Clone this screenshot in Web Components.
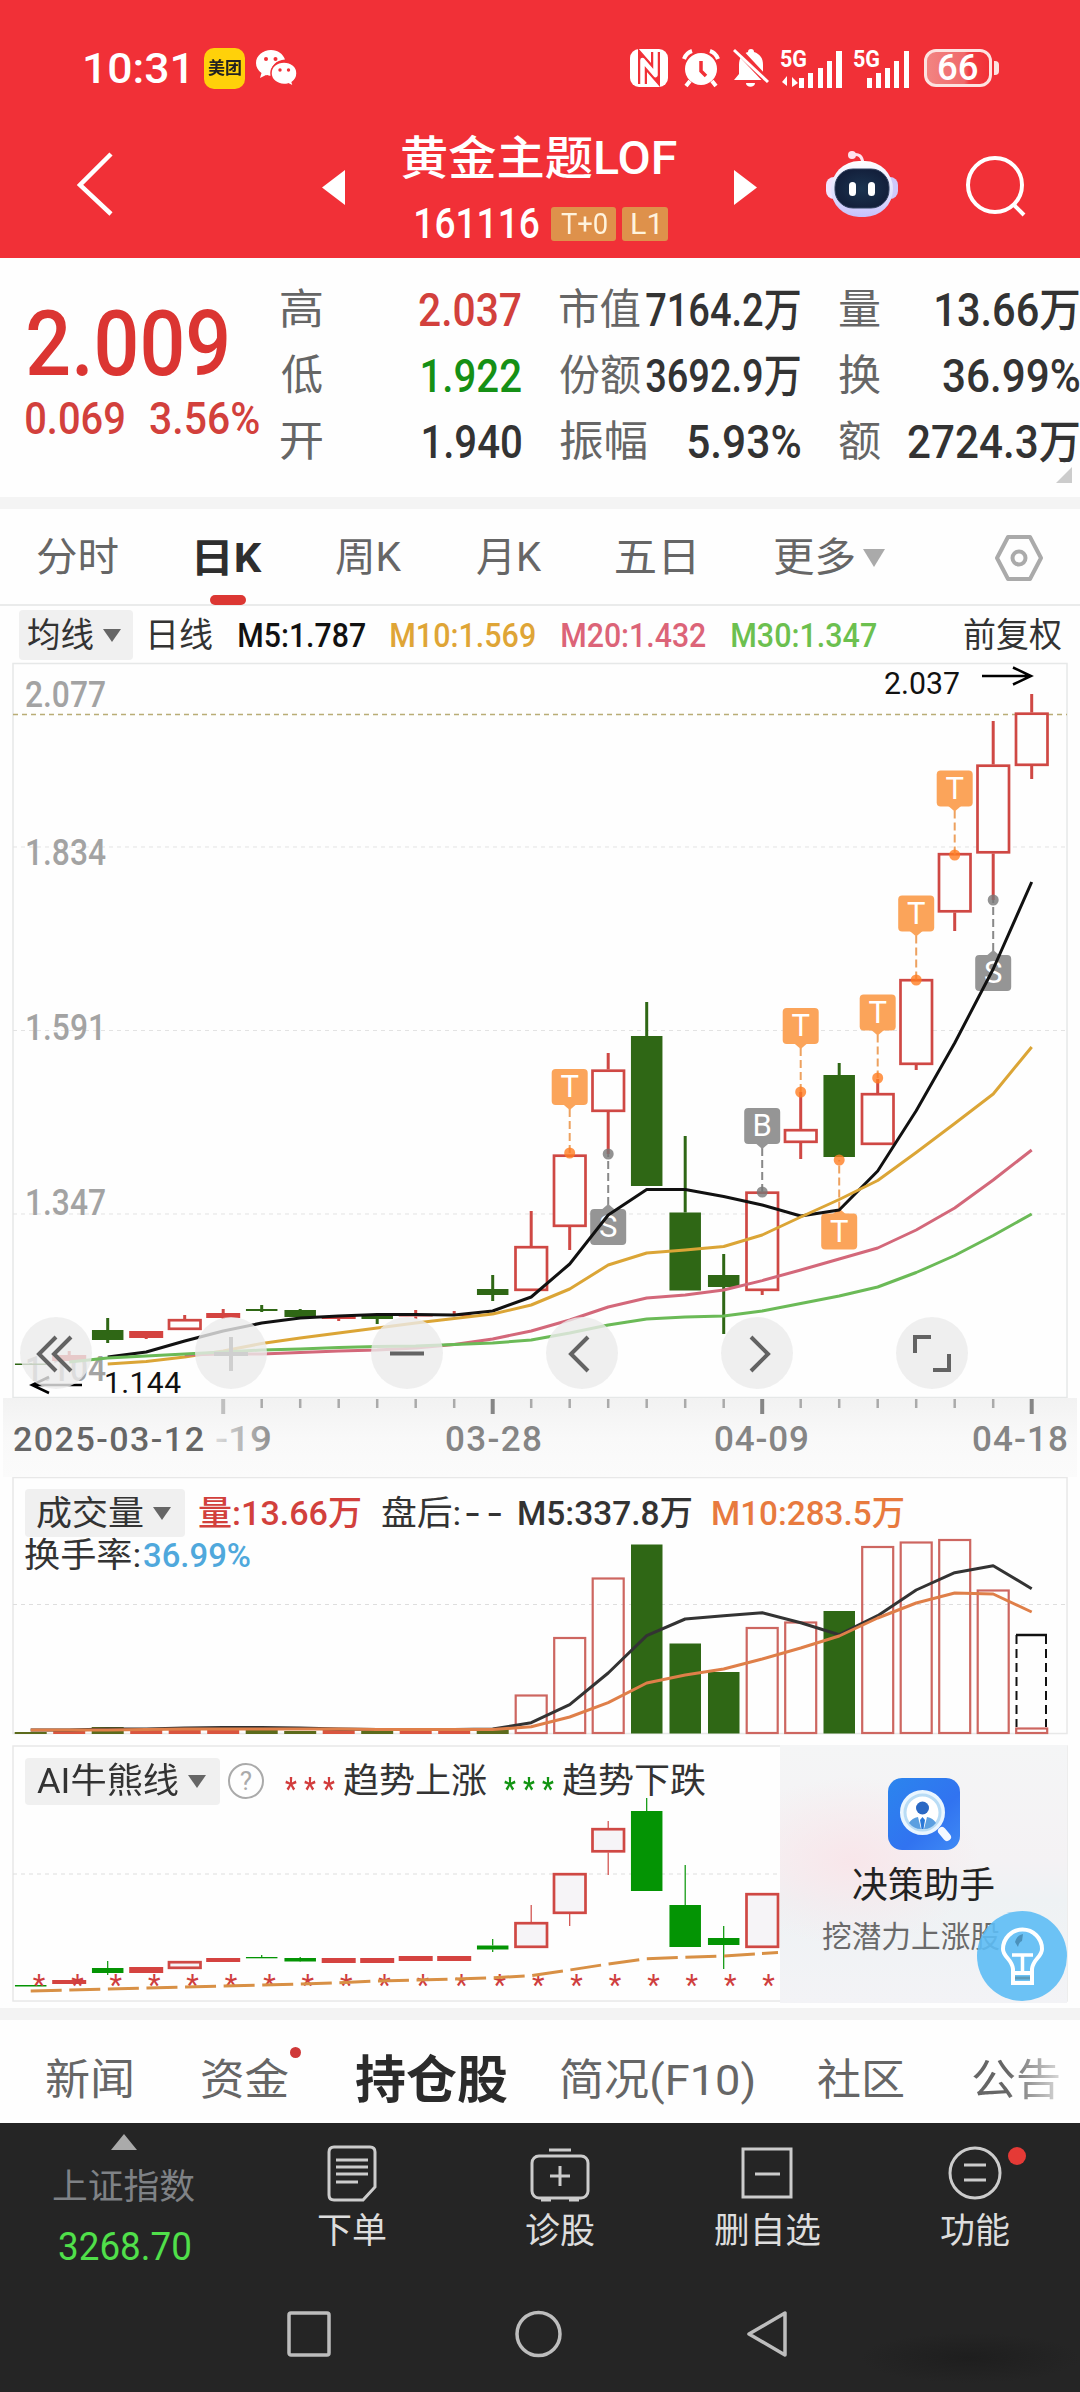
<!DOCTYPE html>
<html lang="zh-CN">
<head>
<meta charset="utf-8">
<title>黄金主题LOF</title>
<style>
  body {
    margin: 0;
    width: 1080px;
    height: 2392px;
    overflow: hidden;
    background: #fefefe;
    color: #333;
    font-family: Roboto, "Noto Sans CJK SC", sans-serif;
  }
</style>
</head>
<body>
<quote-app></quote-app>

<script>
const canvasCtx = document.createElement('canvas').getContext('2d');

// one line of text condensed or widened to a given width
class FitText extends HTMLElement {
    constructor() {
        super();
        this.attachShadow({ mode: 'open' });
        this.shadowRoot.innerHTML = `
          <style>
          :host { display: block; flex: none; line-height: 1; white-space: nowrap; }
          span { display: inline-block; transform-origin: 0 50%; }
          </style>
          <span><slot></slot></span>
        `;
    }

    connectedCallback() {
        this.fit();
    }

    fit() {
        const width = Number(this.getAttribute('w'));
        const style = getComputedStyle(this);
        canvasCtx.font = `${style.fontWeight} ${style.fontSize} ${style.fontFamily}`;
        canvasCtx.letterSpacing = style.letterSpacing === 'normal' ? '0px' : style.letterSpacing;
        const m = canvasCtx.measureText(this.textContent);
        const ink = m.actualBoundingBoxLeft + m.actualBoundingBoxRight;
        const scale = width / ink;
        this.style.width = width + 'px';
        this.shadowRoot.querySelector('span').style.transform =
            `translateX(${m.actualBoundingBoxLeft * scale}px) scaleX(${scale})`;
    }
}
window.customElements.define('fit-text', FitText);

// small helper for the plain, stateless parts of the page
function define(name, css, html) {
    const template = document.createElement('template');
    template.innerHTML = `<style>${css}</style>${html}`;
    window.customElements.define(name, class extends HTMLElement {
        constructor() {
            super();
            this.attachShadow({ mode: 'open' });
        }

        connectedCallback() {
            this.shadowRoot.appendChild(template.content.cloneNode(true));
            this.shadowRoot.querySelectorAll('fit-text').forEach(t => t.fit());
        }
    });
}

// fit-text with width, left margin and an optional style
const ft = (text, w, ml = 0, style = '') =>
    `<fit-text w="${w}" style="margin-left:${ml}px;${style}">${text}</fit-text>`;

const signal = `
  <svg width="64" height="44" viewBox="-2 -4 64 44" fill="#fff">
    <text x="-1" y="17" font-size="23" font-weight="700" textLength="27" lengthAdjust="spacingAndGlyphs">5G</text>
`;

define('status-bar', `
  :host { display: flex; align-items: center; box-sizing: border-box; height: 110px;
          padding: 26px 0 0 84px; background: #f13037; color: #fff; }
  .meituan { display: flex; align-items: center; justify-content: center; width: 41px; height: 41px;
             margin-left: 17px; border-radius: 10px; background: #ffd10a; color: #222; font-weight: 700; font-size: 17px; }
  svg { flex: none; display: block; overflow: visible; }
  .battery { position: relative; display: flex; align-items: center; justify-content: center; box-sizing: border-box;
             width: 68px; height: 38px; margin-left: 15px; border: 3px solid #fde3e1; border-radius: 12px;
             background: linear-gradient(90deg, #f28482, #f06a6b 60%, #f13f43 68%, #f13037); }
  .battery::after { content: ""; position: absolute; right: -10px; top: 9px; width: 5px; height: 14px;
             border-radius: 0 4px 4px 0; background: #fde3e1; }
`, `
  ${ft('10:31', 102, 1, 'font-size:43px;font-weight:500')}
  <div class="meituan">${ft('美团', 33)}</div>
  <svg width="42" height="38" viewBox="0 0 42 38" style="margin-left:11px" fill="#fff">
    <path d="M15 1C7 1 0 6.600 0 14c0 4 2 7.500 5.500 10L4 29l6-3c2 .6 3.500.8 5 .8C14 17 20 11 29 10.500 27 5 22 1 15 1z"/>
    <path d="M28 13c-7.500 0-13 5-13 11.200S20.500 35.500 28 35.500c1.500 0 3-.2 4.300-.6L37.500 37.500l-1.300-4.200C39 31.200 41 28 41 24.200 41 18 35.500 13 28 13z" stroke="#f13037" stroke-width="1.500"/>
    <g fill="#f13037"><circle cx="10" cy="10" r="2"/><circle cx="19.500" cy="10" r="2"/><circle cx="24" cy="21" r="1.700"/><circle cx="32.500" cy="21" r="1.700"/></g>
  </svg>
  <svg width="38" height="38" viewBox="0 0 38 38" style="margin-left:332px" fill="none" stroke-linejoin="round">
    <rect x="0" y="0" width="38" height="38" rx="9" fill="#fff"/>
    <path d="M12.500 35V11L25.500 26V3" stroke="#f13037" stroke-width="9" stroke-linejoin="miter"/>
    <path d="M12.500 38V11L25.500 26V0" stroke="#fff" stroke-width="4.500"/>
  </svg>
  <svg width="38" height="38" viewBox="0 0 38 38" style="margin-left:14px" fill="none" stroke="#fff" stroke-width="4">
    <circle cx="19" cy="20" r="16" fill="#fff" stroke="none"/>
    <path d="M2 10Q4 4 10 2M28 2Q34 4 36 10" stroke-width="4"/><path d="M8 32l-4 5M30 32l4 5"/>
    <path d="M19 12v10l5 5" stroke="#f13037" stroke-width="3.500"/>
  </svg>
  <svg width="38" height="40" viewBox="0 0 38 40" style="margin-left:12px">
    <path d="M19 1c2 0 3 1.200 3 3 6 2 9 6 9 13v9l4 6H2l5-6v-9C7 10 10 6 16 4c0-1.800 1-3 3-3z" fill="#fff"/>
    <path d="M14 35h9c0 5-9 5-9 0z" fill="#fff"/>
    <path d="M5 1l31 33" stroke="#f13037" stroke-width="7"/><path d="M2 2l34 32" stroke="#fff" stroke-width="3"/>
  </svg>
  <div style="margin-left:9px">${signal}
    <path d="M1 32l5-6v10zM17 33l-6-6v10z"/>
    <path d="M18 28h5v10h-5zM27 23h5v15h-5zM37 18h5v20h-5zM46 11h5v27h-5zM55 1h6v37h-6z"/></svg></div>
  <div style="margin-left:9px;width:60px">${signal}
    <path d="M13 28h5v10h-5zM22 23h5v15h-5zM31 18h5v20h-5zM40 11h5v27h-5zM50 1h5v37h-5z"/></svg></div>
  <div class="battery" style="margin-left:12px">${ft('66', 38, 0, 'font-size:36px;font-weight:500')}</div>
`);

define('title-bar', `
  :host { display: flex; align-items: center; box-sizing: border-box; height: 148px;
          padding-left: 75px; background: #f13037; color: #fff; }
  svg { flex: none; display: block; }
  .name { width: 275px; height: 148px; margin: 0 57px; }
  .name > fit-text { margin-top: 25px !important; font-size: 46px; font-weight: 500; }
  .code { display: flex; align-items: center; height: 34px; margin-top: 26px; padding-left: 14px; }
  .tag { display: flex; align-items: center; justify-content: center; height: 34px; border-radius: 3px;
         background: #de914b; color: #fff3dd; font-size: 29px; }
`, `
  <svg width="40" height="68" viewBox="0 0 40 68" fill="none" stroke="#fff" stroke-width="4.500"><path d="M36 4L5 35l31 29"/></svg>
  <svg width="23" height="35" viewBox="0 0 23 35" fill="#fff" style="margin:6px 0 0 207px"><path d="M23 0v35L0 17.500z"/></svg>
  <div class="name">
    ${ft('黄金主题LOF', 275)}
    <div class="code">${ft('161116', 123, 0, 'font-size:42px;font-weight:500')}
      <div class="tag" style="width:65px;margin-left:12px">${ft('T+0', 46)}</div>
      <div class="tag" style="width:46px;margin-left:6px">${ft('L1', 26)}</div>
    </div>
  </div>
  <svg width="23" height="35" viewBox="0 0 23 35" fill="#fff" style="margin-top:6px"><path d="M0 0v35l23-17.500z"/></svg>
  <svg width="72" height="68" viewBox="0 0 72 68" style="margin-left:69px">
    <defs><linearGradient id="head" x1="0" y1="0" x2="0" y2="1"><stop offset="0" stop-color="#fff"/><stop offset=".65" stop-color="#dcdcff"/><stop offset="1" stop-color="#c6c0fb"/></linearGradient>
    <radialGradient id="face"><stop offset="0" stop-color="#1b3450"/><stop offset="1" stop-color="#13203c"/></radialGradient></defs>
    <path d="M26 5q10-3 11 9" fill="none" stroke="#ffe3ee" stroke-width="3"/><circle cx="26" cy="5" r="4" fill="#ffe3ee"/>
    <rect x="0" y="27" width="16" height="22" rx="8" fill="#f1e4ff"/><rect x="56" y="27" width="16" height="22" rx="8" fill="#cfc8fb"/>
    <rect x="5" y="11" width="62" height="56" rx="28" fill="url(#head)"/>
    <rect x="9" y="19" width="54" height="39" rx="18" fill="url(#face)" stroke="#31415f"/>
    <rect x="23" y="32" width="7" height="14" rx="3.500" fill="#fff"/><rect x="42" y="32" width="7" height="14" rx="3.500" fill="#fff"/>
  </svg>
  <svg width="62" height="62" viewBox="0 0 62 62" fill="none" stroke="#fff" stroke-width="4" style="margin:5px 0 0 67px"><circle cx="30" cy="29" r="27"/><path d="M48 48l11 11"/></svg>
`);

const quoteRow = (label, lw, value, vw, color = '#333') =>
    `<div class="row">${ft(label, lw, 0, 'color:#666;font-size:42px')}${ft(value, vw, 0, `color:${color}`)}</div>`;

define('quote-panel', `
  :host { position: relative; display: flex; box-sizing: border-box; height: 251px; background: #fefefe; border-bottom: 12px solid #f4f4f4; }
  .price { flex: none; width: 253px; padding: 41px 0 0 28px; color: #db3532; }
  .change { display: flex; margin-top: 7px; margin-left: -2px; font-size: 44px; font-weight: 500; color: #d2403c; }
  .col { width: 240px; padding-top: 19px; margin-right: 39px; flex: none; font-size: 46px; font-weight: 500; }
  .row { display: flex; align-items: center; justify-content: space-between; height: 66px; }
  .row > fit-text:first-child { font-weight: 400; }
  i { position: absolute; right: 8px; bottom: 14px; border: 8px solid; border-color: transparent #ccc #ccc transparent; }
`, `
  <div class="price">
    ${ft('2.009', 199, 0, 'font-size:91px;font-weight:500')}
    <div class="change">${ft('0.069', 98)}${ft('3.56%', 109, 26)}</div>
  </div>
  <div class="col">${quoteRow('高', 41, '2.037', 102, '#d2403c')}${quoteRow('低', 41, '1.922', 99, '#159015')}${quoteRow('开', 41, '1.940', 98)}</div>
  <div class="col">${quoteRow('市值', 80, '7164.2万', 154)}${quoteRow('份额', 80, '3692.9万', 154)}${quoteRow('振幅', 86, '5.93%', 112)}</div>
  <div class="col">${quoteRow('量', 41, '13.66万', 143)}${quoteRow('换', 41, '36.99%', 136)}${quoteRow('额', 41, '2724.3万', 171)}</div>
  <i></i>
`);

define('period-tabs', `
  :host { display: flex; align-items: center; box-sizing: border-box; height: 97px; border-bottom: 2px solid #eaebeb;
          font-size: 40px; color: #666; }
  :host > *, fit-text { padding-top: 2px; }
  .active { position: relative; color: #2e2e2e; font-weight: 700; }
  .active::after { content: ""; position: absolute; left: 13px; bottom: -26px; width: 36px; height: 10px; border-radius: 5px; background: #dc3733; }
  svg { display: block; flex: none; }
`, `
  ${ft('分时', 81, 37)}
  <div class="active" style="margin-left:79px">${ft('日K', 65)}</div>
  ${ft('周K', 66, 74)}${ft('月K', 65, 75)}${ft('五日', 78, 74)}${ft('更多', 80, 80)}
  <svg width="22" height="18" style="margin-left:9px"><path d="M0 0h22L11 18z" fill="#aaa"/></svg>
  <svg width="50" height="48" viewBox="0 0 50 48" fill="none" stroke="#aaa" stroke-width="4" stroke-linejoin="round" style="margin-left:109px"><path d="M14 3h22l11 21-11 21H14L3 24z"/><circle cx="25" cy="24" r="6.500"/></svg>
`);

define('drop-button', `
  :host { display: flex; flex: none; align-items: center; background: #f0f0f0; border-radius: 4px; }
  svg { margin-left: 10px; }
`, `<slot></slot><svg width="18" height="13"><path d="M0 0h18L9 13z" fill="#666"/></svg>`);

define('ma-legend', `
  :host { display: flex; align-items: center; box-sizing: border-box; height: 56px; padding-top: 2px; font-size: 34px; }
  drop-button { height: 50px; width: 105px; padding-left: 9px; margin-left: 19px; }
  .num { display: flex; font-weight: 500; }
`, `
  <drop-button>${ft('均线', 65)}</drop-button>
  ${ft('日线', 62, 17)}
  <div class="num">
  ${ft('M5:1.787', 126, 27, 'color:#111')}${ft('M10:1.569', 144, 26, 'color:#dfa536')}
  ${ft('M20:1.432', 144, 27, 'color:#dc6478')}${ft('M30:1.347', 144, 26, 'color:#6cc04f')}
  </div>
  ${ft('前复权', 97, 88)}
`);

const RED = '#cf4844';
const GREEN = '#2f6715';
const cx = i => 30.7 + 38.5 * i;

const polyline = (start, ys, color, extra = '') =>
    `<polyline points="${ys.map((y, n) => cx(start + n).toFixed(1) + ',' + y).join(' ')}" fill="none" stroke="${color}" stroke-width="3" stroke-linejoin="round" ${extra}/>`;

const svgText = (x, y, w, size, text, color, adjust = 'spacingAndGlyphs') =>
    `<text x="${x}" y="${y}" font-size="${size}" fill="${color}" textLength="${w}" lengthAdjust="${adjust}">${text}</text>`;

// [type, high, top, bottom, low], type: r hollow red, f flat red, g green
function candle(i, [type, high, top, bottom, low], green, hollow, wick) {
    const x = cx(i);
    const color = type === 'g' ? green : RED;
    let out = '';
    if (high < top) out += `<path d="M${x} ${high}V${top}" stroke="${color}" stroke-width="${wick}"/>`;
    if (low > bottom) out += `<path d="M${x} ${bottom}V${low}" stroke="${color}" stroke-width="${wick}"/>`;
    if (type === 'r') {
        out += `<rect x="${x - 15.7}" y="${top + 1.2}" width="31.500" height="${bottom - top - 2.4}" fill="${hollow}" stroke="${color}" stroke-width="2.700"/>`;
    } else {
        const w = type === 'f' ? 34 : 31.5;
        out += `<rect x="${x - w / 2}" y="${top}" width="${w}" height="${bottom - top}" fill="${type === 'f' ? '#d44340' : color}"/>`;
    }
    return out;
}

const kData = [
    ['g', 1363, 1363.5, 1365, 1365], ['f', 1351, 1355, 1361, 1361], ['g', 1318, 1330, 1340, 1343],
    ['f', 1331, 1331, 1338, 1339], ['r', 1315, 1319, 1330, 1330], ['f', 1309, 1313, 1318, 1319],
    ['g', 1305, 1309, 1311, 1312], ['g', 1309, 1310, 1317, 1317], ['f', 1315, 1316, 1319, 1321],
    ['g', 1316, 1316, 1319, 1324], ['f', 1310, 1315, 1316.5, 1319], ['f', 1311, 1314.5, 1316, 1316],
    ['g', 1275, 1289, 1295, 1301], ['r', 1211, 1246, 1291, 1291], ['r', 1155, 1154.5, 1227, 1250],
    ['r', 1053, 1069.5, 1112, 1154], ['g', 1002, 1036, 1186, 1186], ['g', 1136, 1212.5, 1290.5, 1290],
    ['g', 1254, 1275, 1287, 1334], ['r', 1192, 1191.5, 1291, 1295], ['r', 1092, 1129, 1143, 1159],
    ['g', 1063, 1075, 1157, 1157], ['r', 1079, 1093, 1145, 1145], ['r', 980, 979, 1065, 1070],
    ['r', 855, 853, 912.5, 931], ['r', 721, 764.5, 853.5, 900], ['r', 694, 712.5, 766, 779],
];

// [index, letter, box top, points down, dot y]
const marks = [
    [14, 'T', 1069, true, 1153], [15, 'S', 1209, false, 1154], [19, 'B', 1108, true, 1192],
    [20, 'T', 1008, true, 1092], [21, 'T', 1213.5, false, 1160], [22, 'T', 994.5, true, 1078],
    [23, 'T', 895.5, true, 980], [24, 'T', 770.5, true, 855], [25, 'S', 955, false, 900],
];

function mark([i, letter, top, down, dot]) {
    const x = cx(i);
    const color = letter === 'T' ? '#fba45a' : '#959595';
    const tip = down ? `M${x - 7} ${top + 35}h14l-7 6z` : `M${x - 7} ${top + 1}h14l-7-6z`;
    return `
      <path d="M${x} ${down ? top + 40 : top - 4}V${dot}" stroke="${letter === 'T' ? '#eda15f' : '#888'}" stroke-width="2" stroke-dasharray="8 4"/>
      <circle cx="${x}" cy="${dot}" r="5.500" fill="${letter === 'T' ? '#ff7d22' : '#777'}" opacity=".8"/>
      <rect x="${x - 18}" y="${top}" width="36" height="36" rx="4" fill="${color}"/><path d="${tip}" fill="${color}"/>
      <text x="${x}" y="${top + 28}" font-size="31" text-anchor="middle" fill="#fff">${letter}</text>`;
}

const ticks = kData.map((_, i) => i < 5 ? '' : (i - 5) % 7
    ? `<path d="M${cx(i)} 1399V1408" stroke="#aaa" stroke-width="2.500"/>`
    : `<path d="M${cx(i)} 1399V1414" stroke="${i === 5 ? '#c0c0c0' : '#868686'}" stroke-width="4"/>`).join('');

define('k-chart', `
  :host { position: relative; display: block; height: 815px; }
  svg { display: block; }
  .controls { position: absolute; left: 20px; top: 655px; display: flex; gap: 103.300px; }
  .controls svg { width: 72px; height: 72px; border-radius: 50%; background: rgba(235, 235, 235, .8);
                  fill: none; stroke: #636363; stroke-width: 4; }
`, `
  <svg width="1080" height="815" viewBox="0 662 1080 815">
    <defs>
      <linearGradient id="axis" x1="0" y1="0" x2="0" y2="1"><stop offset="0" stop-color="#f2f2f2"/><stop offset=".5" stop-color="#f9f9f9"/><stop offset="1" stop-color="#fbfbfb"/></linearGradient>
      <linearGradient id="fade"><stop offset="0" stop-color="#dcdcdc"/><stop offset="1" stop-color="#8f8f8f"/></linearGradient>
    </defs>
    <rect x="13" y="663.500" width="1054" height="734" fill="none" stroke="#e6e8e8" stroke-width="1.500"/>
    <rect x="3" y="1398" width="1074" height="79" fill="url(#axis)"/>
    <g stroke="#e3e3e3" stroke-dasharray="4 4"><path d="M13 847H1067M13 1030.500H1067M13 1214H1067"/></g>
    <path d="M13 714.500H1067" stroke="#b9ad76" stroke-width="1.500" stroke-dasharray="5 4"/>
    <g font-weight="500">
    ${svgText(25, 707, 81, 36, '2.077', '#a3a3a3')}${svgText(25, 865, 81, 36, '1.834', '#a3a3a3')}
    ${svgText(25, 1040, 81, 36, '1.591', '#a3a3a3')}${svgText(25, 1215, 81, 36, '1.347', '#a3a3a3')}
    ${svgText(25, 1381, 81, 35, '1.104', '#a3a3a3')}
    </g>
    ${kData.map((d, i) => candle(i, d, GREEN, '#fefefe', 3)).join('')}
    ${marks.map(mark).join('')}
    ${polyline(2, [1357, 1352, 1341, 1331, 1323, 1318, 1316, 1314.5, 1314.5, 1315, 1311, 1297, 1264, 1215, 1189.5, 1189.5, 1196.5, 1205, 1216, 1210, 1171, 1110.7, 1043, 969, 882], '#111')}
    ${polyline(2, [1364, 1361.5, 1357, 1351, 1343.5, 1338, 1333, 1328, 1323, 1318.5, 1314, 1305, 1289, 1265, 1253, 1250, 1246.5, 1235, 1217, 1199.5, 1180.5, 1152.5, 1123.5, 1094, 1047], '#dba536')}
    ${polyline(4, [1355, 1354, 1354, 1352.5, 1351, 1350, 1348, 1344.5, 1339, 1331, 1320, 1307, 1298, 1295, 1290, 1280.6, 1270, 1259, 1248, 1230, 1208, 1180, 1150], '#d3687a')}
    ${polyline(1, [1362, 1358, 1356, 1354, 1352, 1350, 1349, 1347.5, 1346.5, 1346, 1344.5, 1343, 1340, 1333, 1325, 1319, 1317, 1316, 1311, 1303.5, 1296, 1287, 1272.5, 1255.5, 1235.5, 1214], '#6bba57')}
    <g stroke="#000" stroke-width="2.500" fill="none"><path d="M982 676H1031M1013 667.500L1031 676L1013 684.500"/><path d="M82 1385H32M49 1377L32 1385L49 1393"/></g>
    ${svgText(884, 694, 76, 32, '2.037', '#111')}
    ${svgText(104, 1393, 77, 30, '1.144', '#111', 'spacing')}
    ${ticks}
    <g font-weight="500">
    ${svgText(215, 1451, 57, 35, '-19', 'url(#fade)')}
    ${svgText(13, 1451, 191, 34, '2025-03-12', '#666', 'spacing')}
    ${svgText(445, 1451, 97, 35, '03-28', '#858585', 'spacing')}${svgText(714, 1451, 95, 35, '04-09', '#858585', 'spacing')}
    ${svgText(972, 1451, 96, 35, '04-18', '#858585', 'spacing')}
    </g>
  </svg>
  <div class="controls">
    <svg viewBox="0 0 72 72"><path d="M36 20L19 37l17 17M51 20L34 37l17 17"/></svg>
    <svg viewBox="0 0 72 72" style="stroke:#cfcfcf"><path d="M36 20v34M19 37h34"/></svg>
    <svg viewBox="0 0 72 72"><path d="M19 36.500h34"/></svg>
    <svg viewBox="0 0 72 72"><path d="M42 20L25 37l17 17"/></svg>
    <svg viewBox="0 0 72 72"><path d="M30 20l17 17-17 17"/></svg>
    <svg viewBox="0 0 72 72"><path d="M35 20H19v16M37 53h16V37"/></svg>
  </div>
`);

// top of each volume bar from the fourteenth day on
const volTops = [1694.5, 1637, 1577.5, 1544.5, 1643.5, 1672, 1627, 1621.5, 1611, 1546, 1541.5, 1539, 1589.5, 1727.5];
const volGreen = [16, 17, 18, 21];
const volSmall = [['g', 1732], ['r', 1730], ['g', 1727], ['r', 1729], ['r', 1730], ['r', 1730], ['g', 1730], ['g', 1731], ['r', 1730], ['g', 1731], ['r', 1730], ['r', 1730], ['g', 1728]];

const volBars = volTops.map((top, n) => {
    const i = n + 13;
    if (volGreen.includes(i)) {
        return `<rect x="${cx(i) - 15.7}" y="${top}" width="31.500" height="${1733.5 - top}" fill="${GREEN}"/>`;
    }
    return `<rect x="${cx(i) - 15.5}" y="${top + 1}" width="31" height="${1732 - top}" fill="none" stroke="#cd6660" stroke-width="2.200"/>`;
}).join('') + volSmall.map(([t, y], i) =>
    `<rect x="${cx(i) - 16}" y="${y}" width="32" height="${1734 - y}" fill="${t === 'g' ? '#5c6b1c' : '#d9553f'}"/>`).join('');

define('volume-chart', `
  :host { position: relative; display: block; box-sizing: border-box; height: 268px; padding: 11px 0 0 25px; }
  .plot { position: absolute; left: 0; top: 0; }
  .row { position: relative; display: flex; align-items: center; font-size: 34px; font-weight: 500; }
  .cjk { font-weight: 400; }
  drop-button { width: 148px; height: 48px; padding-left: 12px; font-weight: 400; }
`, `
  <svg class="plot" width="1080" height="268" viewBox="0 1477 1080 268">
    <rect x="13" y="1477.500" width="1054" height="256" fill="#fefefe" stroke="#e8e8e8" stroke-width="1.500"/>
    <path d="M13 1604.500H1067" stroke="#dedede" stroke-dasharray="4 4"/>
    ${volBars}
    <path d="M1016 1635h31" stroke="#111" stroke-width="2.500"/><path d="M1016.500 1635V1727M1046 1635V1727" stroke="#111" stroke-width="2" stroke-dasharray="9 5"/>
    ${polyline(0, [1730, 1730, 1729, 1729, 1728, 1727.5, 1727.5, 1728, 1729, 1729.5, 1729.5, 1729.5, 1729, 1722.7, 1704.7, 1673, 1635.7, 1619, 1615.7, 1612.7, 1622.7, 1634.7, 1615.7, 1590, 1572.7, 1565.7, 1588.7], '#333')}
    ${polyline(0, [1730, 1730, 1730, 1729.5, 1729, 1729, 1729, 1729, 1729, 1729.5, 1729.5, 1729.5, 1729.5, 1726.7, 1717, 1702.7, 1683, 1675, 1669, 1659, 1648, 1636, 1618, 1603, 1593, 1594, 1612], '#df7f49')}
  </svg>
  <div class="row" style="height:50px">
    <drop-button>${ft('成交量', 106)}</drop-button>
    ${ft('量:13.66万', 161, 14, 'color:#d2403c')}${ft('盘后:', 78, 22, 'font-weight:400')}${ft('--', 36, 6, 'letter-spacing:5px')}
    ${ft('M5:337.8万', 172, 17)}${ft('M10:283.5万', 190, 22, 'color:#e87a3e')}
  </div>
  <div class="row" style="height:34px">${ft('换手率:', 115, 0, 'font-weight:400')}${ft('36.99%', 106, 4, 'color:#4fa8dc')}</div>
`);

const trendData = [
    ['g', 1985, 1985, 1986.5, 1986], ['f', 1980, 1980, 1984, 1984], ['g', 1961, 1968, 1973, 1975],
    ['f', 1967, 1967, 1973, 1973], ['r', 1961, 1961, 1969, 1969], ['f', 1958, 1958, 1962, 1962],
    ['g', 1955, 1957, 1958.3, 1958], ['g', 1957, 1958, 1961.5, 1962], ['f', 1958, 1958, 1963, 1963],
    ['f', 1958, 1958, 1963, 1963], ['f', 1956, 1956, 1961, 1961], ['f', 1956, 1956, 1961, 1961],
    ['g', 1939, 1945.5, 1949.5, 1952], ['r', 1905, 1922, 1948, 1948], ['r', 1873, 1873, 1914, 1926],
    ['r', 1821, 1828, 1852.5, 1875], ['g', 1798, 1811, 1891, 1891], ['g', 1865, 1905, 1947, 1947],
    ['g', 1926, 1938, 1945, 1969], ['r', 1893, 1893, 1948, 1948],
];

define('trend-chart', `
  :host { position: relative; display: flex; height: 263px; border-bottom: 12px solid #f3f3f3; }
  .plot { position: absolute; left: 0; top: 0; }
  .row { position: relative; display: flex; flex: none; align-items: center; width: 755px; height: 50px; margin-top: 11px; padding-left: 25px; font-size: 35px; }
  drop-button { width: 183px; height: 47px; padding-left: 12px; }
  .help { box-sizing: border-box; width: 36px; height: 36px; margin-left: 8px; border: 2px solid #aaa; border-radius: 50%;
          color: #aaa; font-size: 26px; line-height: 33px; text-align: center; }
  .stars { font-size: 32px; font-weight: 700; letter-spacing: 9px; padding-top: 13px; }
  .promo { position: relative; flex: none; box-sizing: border-box; width: 287px; height: 258px; padding-top: 33px;
           background: radial-gradient(ellipse at 25% 45%, #f8e6ea, transparent 42%), linear-gradient(#f4f5f6, #f4f2f4 45%, #eef2f4 60%, #f3f3f6); }
  .promo > svg { display: block; margin-left: 108px; }
  .tip { position: absolute; right: 13px; top: 166px; width: 90px; height: 90px; }
`, `
  <svg class="plot" width="1080" height="263" viewBox="0 1745 1080 263">
    <rect x="13" y="1746" width="1054" height="255" fill="#fefefe" stroke="#e8e8e8" stroke-width="1.500"/>
    <path d="M13 1874H780" stroke="#dedede" stroke-dasharray="4 4"/>
    ${trendData.map((d, i) => candle(i, d, '#049404', '#f6f4f7', 1.2)).join('')}
    ${trendData.map((_, i) => `<text x="${39 + 38.4 * i}" y="1995" font-size="29" text-anchor="middle" fill="#cf3e3e">*</text>`).join('')}
    ${polyline(0, [1991, 1990, 1989, 1988, 1987, 1986, 1985, 1984, 1982.7, 1981, 1980, 1979, 1977.7, 1975.7, 1970, 1964, 1958.7, 1957.3, 1956, 1953.5], '#d89045', 'stroke-dasharray="31 7.600"')}
    <path d="M762 1953.500L778 1952.500" stroke="#d89045" stroke-width="3"/>
  </svg>
  <div class="row">
    <drop-button>${ft('AI牛熊线', 141)}</drop-button>
    <div class="help">?</div>
    <div class="stars" style="color:#d23c3c;margin-left:21px">${ft('***', 50)}</div>${ft('趋势上涨', 142, 9)}
    <div class="stars" style="color:#129412;margin-left:18px">${ft('***', 50)}</div>${ft('趋势下跌', 142, 9)}
  </div>
  <div class="promo">
    <svg width="72" height="72" viewBox="0 0 72 72">
      <defs><linearGradient id="app" x1="0" y1="0" x2="1" y2="1"><stop offset="0" stop-color="#2b85ee"/><stop offset=".6" stop-color="#3173f0"/><stop offset="1" stop-color="#3f8af5"/></linearGradient></defs>
      <rect width="72" height="72" rx="14" fill="url(#app)"/>
      <path d="M54 53l5 6" stroke="#f3f8ff" stroke-width="8" stroke-linecap="round"/>
      <circle cx="34.500" cy="34.500" r="20.500" fill="#fff" stroke="#eaf6ff" stroke-width="4"/>
      <circle cx="34.500" cy="34.500" r="17.500" fill="#fff" stroke="#b9dcf5" stroke-width="3"/>
      <path d="M21 45q3-5 9-6l3 12q-7 0-12-6zM48 45q-3-5-9-6l-3 12q7 0 12-6z" fill="#5b9fe0"/>
      <circle cx="34.500" cy="30" r="6.500" fill="#2a68c4"/><path d="M34.500 39l2.500 3-1.500 9h-2L32 42z" fill="#2a78d8"/>
    </svg>
    ${ft('决策助手', 141, 73, 'margin-top:18px;font-size:36px;color:#222')}
    ${ft('挖潜力上涨股', 176, 43, 'margin-top:18px;font-size:30px;color:#6a6a6a')}
  </div>
  <svg class="tip" viewBox="0 0 90 90">
    <circle cx="45" cy="45" r="45" fill="#5dbdf5" opacity=".9"/>
    <path d="M38 31q2-7 8-8l-1 7q-3 1-4 6z" fill="#4b91bb"/>
    <g fill="none" stroke="#fff" stroke-width="4"><path d="M36 72V58C35 48 26 46 26 38a19.500 19.500 0 0 1 39 0c0 8-9 10-10 20v14zM36 62h19"/><path d="M35 44h21M45.500 44v18" stroke-width="3.500"/></g>
    <path d="M38 67h15" stroke="#5d9cba" stroke-width="3"/>
  </svg>
`);

define('section-tabs', `
  :host { display: flex; align-items: center; height: 103px; padding-top: 10px; box-sizing: border-box;
          background: #fefefe; font-size: 43px; color: #666; }
  fit-text { padding-top: 8px; }
  i { width: 11px; height: 11px; margin: -48px 0 0 2px; border-radius: 50%; background: #cf3838; }
`, `
  ${ft('新闻', 86, 46)}${ft('资金', 86, 70)}<i></i>
  ${ft('持仓股', 151, 55, 'font-size:51px;font-weight:700;color:#2b2b2b')}
  ${ft('简况(F10)', 192, 54)}${ft('社区', 85, 65)}
  ${ft('公告', 86, 70, '-webkit-mask-image:linear-gradient(90deg,#000 40%,rgba(0,0,0,.25))')}
`);

const tool = (label, w, left, body, extra = '') => `
  <div class="tool" style="margin-left:${left}px">
    <svg width="60" height="60" viewBox="0 0 60 60">${body}</svg>${ft(label, w)}${extra}
  </div>`;

define('tool-bar', `
  :host { display: flex; height: 165px; background: #252525; color: #ddd; font-size: 35px; }
  .index { display: flex; flex-direction: column; align-items: center; width: 142px; margin-left: 53px; padding-top: 11px; color: #7f8286; }
  .tool { position: relative; display: flex; flex-direction: column; align-items: center; flex: none; width: 110px; padding-top: 20px; }
  .tool svg { fill: none; stroke: #ccc; stroke-width: 3; margin-bottom: 11px; }
  .badge { position: absolute; right: 4px; top: 24px; width: 18px; height: 18px; border-radius: 50%; background: #e53a36; }
`, `
  <div class="index">
    <svg width="26" height="16"><path d="M13 0l13 16H0z" fill="#aaa"/></svg>
    ${ft('上证指数', 142, 0, 'margin-top:20px')}
    ${ft('3268.70', 131, 0, 'margin-top:23px;font-size:39px;color:#50e04a')}
  </div>
  ${tool('下单', 68, 102, '<path d="M12 4h36q5 0 5 5v35l-12 13H12q-5 0-5-5V9q0-5 5-5zM14 17h32M14 24h32M14 31h32M14 39h22"/>')}
  ${tool('诊股', 68, 98, '<rect x="2" y="13" width="56" height="42" rx="7"/><path d="M19 7h22"/><path d="M30 23v20M20 33h20M11 57h10M39 57h10" stroke-width="3"/>')}
  ${tool('删自选', 105, 97, '<path d="M6 6h48v48H6zM18 31h25"/>')}
  ${tool('功能', 68, 98, '<circle cx="30" cy="30" r="25"/><path d="M19 22h22M19 37h22"/>', '<span class="badge"></span>')}
`);

define('system-nav', `
  :host { display: flex; align-items: center; height: 104px; box-sizing: border-box; padding: 0 0 12px 287px; gap: 184px;
          background: radial-gradient(ellipse 110px 25px at 970px 70px, #1e1e1e, transparent), #252525; }
  svg { fill: none; stroke: #bdbdbd; stroke-width: 3.500; stroke-linejoin: round; display: block; }
`, `
  <svg width="44" height="48"><rect x="2" y="3" width="40" height="42" rx="2"/></svg>
  <svg width="47" height="48"><circle cx="23.500" cy="24" r="21.500"/></svg>
  <svg width="42" height="48"><path d="M39 3v42L3 24z"/></svg>
`);

define('quote-app', `
  :host { display: block; width: 1080px; height: 2392px; overflow: hidden; }
`, `
  <status-bar></status-bar>
  <title-bar></title-bar>
  <quote-panel></quote-panel>
  <period-tabs></period-tabs>
  <ma-legend></ma-legend>
  <k-chart></k-chart>
  <volume-chart></volume-chart>
  <trend-chart></trend-chart>
  <section-tabs></section-tabs>
  <tool-bar></tool-bar>
  <system-nav></system-nav>
`);
</script>
</body>
</html>
